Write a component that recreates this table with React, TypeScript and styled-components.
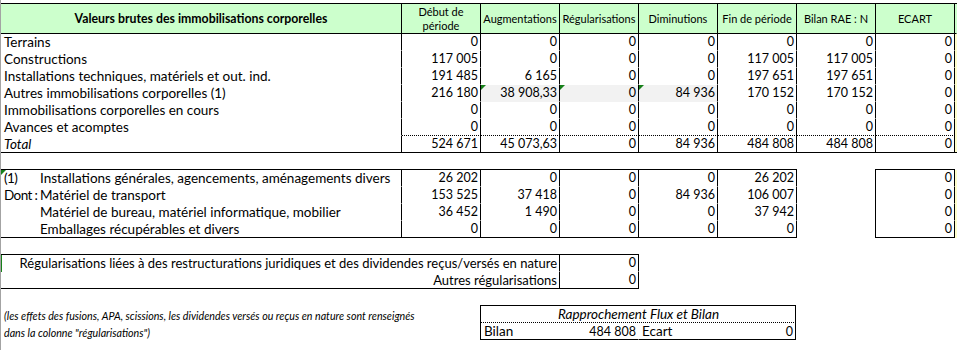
import { Fragment } from "react";
import styled, { createGlobalStyle, css } from "styled-components";

type Line = "solid" | "dotted" | "none";

const GlobalStyle = createGlobalStyle`
  html, body {
    margin: 0;
    padding: 0;
    background: #fff;
  }
  body {
    font-family: Lato, "Liberation Sans", sans-serif;
    color: #000;
  }
`;

const Sheet = styled.div`
  width: 957px;
  height: 350px;
  box-sizing: border-box;
  border-left: 1px solid #a3a3a3;
  padding-top: 3px;
  overflow: hidden;
  display: flex;
  flex-direction: column;
  gap: 16px;
`;

const FlowTable = styled.div`
  display: grid;
  grid-template-columns: 401px repeat(7, 79px) 2px;
  border-top: 1px solid #000;
`;

const HeadCell = styled.div<{ $title?: boolean; $edge?: boolean }>`
  box-sizing: border-box;
  height: 30px;
  background: #ccffcc;
  border-bottom: 1px solid #000;
  border-right: 1px solid ${(p) => (p.$edge ? "transparent" : "#000")};
  display: flex;
  align-items: center;
  justify-content: center;
  text-align: center;
  white-space: pre-line;
  font-size: ${(p) => (p.$title ? "12.3px" : "11px")};
  font-weight: ${(p) => (p.$title ? 700 : 400)};
  line-height: 14px;
`;

const Cell = styled.div<{
  $align?: "left" | "right" | "center";
  $bottom?: Line;
  $right?: boolean;
  $fill?: string;
  $italic?: boolean;
  $flag?: boolean;
  $span?: boolean;
  $size?: number;
}>`
  position: relative;
  box-sizing: border-box;
  height: 17px;
  padding: 0 2px 0 3px;
  font-size: ${(p) => p.$size ?? 13.5}px;
  line-height: 16px;
  white-space: nowrap;
  overflow: hidden;
  display: flex;
  align-items: baseline;
  justify-content: ${(p) =>
    p.$align === "right" ? "flex-end" : p.$align === "center" ? "center" : "flex-start"};
  background: ${(p) => p.$fill ?? "transparent"};
  border-bottom: 1px ${(p) => (p.$bottom === "dotted" ? "dotted" : "solid")}
    ${(p) => (p.$bottom && p.$bottom !== "none" ? "#000" : "transparent")};
  border-right: 1px solid ${(p) => (p.$right ? "#000" : "transparent")};
  font-style: ${(p) => (p.$italic ? "italic" : "normal")};
  ${(p) => p.$span && css`grid-column: 1 / -1;`}
  ${(p) =>
    p.$flag &&
    css`
      &::before {
        content: "";
        position: absolute;
        left: 0;
        top: 0;
        border-top: 5px solid #17801a;
        border-right: 5px solid transparent;
      }
    `}
`;

const Num = styled(Cell).attrs({ $align: "right" as const, $right: true, $size: 12.5 })``;

const Edge = styled.div<{ $bottom?: boolean }>`
  box-sizing: border-box;
  height: 17px;
  background: #ffffcc;
  border-bottom: 1px solid ${(p) => (p.$bottom ? "#000" : "#ffffcc")};
`;

const DetailRow = styled.div`
  display: flex;
  align-items: flex-start;
`;

const DetailTable = styled.div`
  display: grid;
  grid-template-columns: 401px repeat(5, 79px);
  border-top: 1px solid #000;
`;

const Marker = styled.span`
  width: 36px;
  flex: none;
  letter-spacing: -0.6px;
`;

const EcartBox = styled.div`
  margin-left: 78px;
  width: 80px;
  box-sizing: border-box;
  border-top: 1px solid #000;
  border-left: 1px solid #000;
  display: flex;
  flex-direction: column;
`;

const EdgeColumn = styled.div`
  width: 2px;
  padding-top: 1px;
  display: flex;
  flex-direction: column;
`;

const RegulTable = styled.div`
  position: relative;
  display: grid;
  grid-template-columns: 559px 79px;
  width: 638px;
  border-top: 1px solid #000;

  &::before {
    content: "";
    position: absolute;
    left: -1px;
    top: 0;
    width: 2px;
    height: 17px;
    background: #17801a;
  }
`;

const BottomRow = styled.div`
  display: flex;
  align-items: flex-start;
`;

const Footnote = styled.div`
  width: 479px;
  padding-top: 2px;
  font-style: italic;
  font-size: 10.7px;
`;

const NoteLine = styled.div`
  height: 17px;
  line-height: 17px;
  padding-left: 3px;
  white-space: nowrap;
`;

const RapBox = styled.div`
  width: 316px;
  box-sizing: border-box;
  border-top: 1px solid #000;
  border-left: 1px solid #000;
  display: grid;
  grid-template-columns: 158px 157px;
`;

const Grow = styled.span`
  flex: 1;
`;

const Amount = styled.span`
  font-size: 12.5px;
`;

const columns = [
  "Début de\npériode",
  "Augmentations",
  "Régularisations",
  "Diminutions",
  "Fin de période",
  "Bilan RAE : N",
  "ECART",
];

type FlowRow = {
  label: string;
  values: string[];
  total?: boolean;
  shaded?: number[];
};

const zeros = ["0", "0", "0", "0", "0", "0", "0"];

const flows: FlowRow[] = [
  { label: "Terrains", values: zeros },
  { label: "Constructions", values: ["117 005", "0", "0", "0", "117 005", "117 005", "0"] },
  {
    label: "Installations techniques, matériels et out. ind.",
    values: ["191 485", "6 165", "0", "0", "197 651", "197 651", "0"],
  },
  {
    label: "Autres immobilisations corporelles (1)",
    values: ["216 180", "38 908,33", "0", "84 936", "170 152", "170 152", "0"],
    shaded: [1, 2, 3],
  },
  { label: "Immobilisations corporelles en cours", values: zeros },
  { label: "Avances et acomptes", values: zeros },
  {
    label: "Total",
    values: ["524 671", "45 073,63", "0", "84 936", "484 808", "484 808", "0"],
    total: true,
  },
];

type DetailLine = { mark: string; label: string; values: string[]; ecart: string };

const details: DetailLine[] = [
  {
    mark: "(1)",
    label: "Installations générales, agencements, aménagements divers",
    values: ["26 202", "0", "0", "0", "26 202"],
    ecart: "0",
  },
  {
    mark: "Dont :",
    label: "Matériel de transport",
    values: ["153 525", "37 418", "0", "84 936", "106 007"],
    ecart: "0",
  },
  {
    mark: "",
    label: "Matériel de bureau, matériel informatique, mobilier",
    values: ["36 452", "1 490", "0", "0", "37 942"],
    ecart: "0",
  },
  {
    mark: "",
    label: "Emballages récupérables et divers",
    values: ["0", "0", "0", "0", "0"],
    ecart: "0",
  },
];

const regularisations = [
  "Régularisations liées à des restructurations juridiques et des dividendes reçus/versés en nature",
  "Autres régularisations",
];

export default function App() {
  return (
    <>
      <GlobalStyle />
      <Sheet>
        <FlowTable>
          <HeadCell $title>Valeurs brutes des immobilisations corporelles</HeadCell>
          {columns.map((c) => (
            <HeadCell key={c}>{c}</HeadCell>
          ))}
          <HeadCell $edge />
          {flows.map((row, r) => {
            const last = r === flows.length - 1;
            const beforeTotal = r === flows.length - 2;
            return (
              <Fragment key={row.label}>
                <Cell $right $bottom={last ? "solid" : "none"} $italic={row.total}>
                  {row.label}
                </Cell>
                {row.values.map((v, i) => (
                  <Num
                    key={i}
                    $bottom={last ? "solid" : beforeTotal ? "dotted" : "none"}
                    $fill={row.shaded?.includes(i) ? "#f2f2f2" : undefined}
                    $flag={row.shaded?.includes(i)}
                  >
                    {v}
                  </Num>
                ))}
                <Edge $bottom={last} />
              </Fragment>
            );
          })}
        </FlowTable>

        <DetailRow>
          <DetailTable>
            {details.map((d, r) => {
              const last = r === details.length - 1;
              return (
                <Fragment key={d.label}>
                  <Cell $right $bottom={last ? "solid" : "none"} $flag={r === 0}>
                    <Marker>{d.mark}</Marker>
                    {d.label}
                  </Cell>
                  {d.values.map((v, i) => (
                    <Num key={i} $bottom={last ? "solid" : "none"}>
                      {v}
                    </Num>
                  ))}
                </Fragment>
              );
            })}
          </DetailTable>
          <EcartBox>
            {details.map((d, r) => (
              <Num key={d.label} $bottom={r === details.length - 1 ? "solid" : "none"}>
                {d.ecart}
              </Num>
            ))}
          </EcartBox>
          <EdgeColumn>
            {details.map((d) => (
              <Edge key={d.label} />
            ))}
          </EdgeColumn>
        </DetailRow>

        <RegulTable>
          {regularisations.map((label, r) => {
            const last = r === regularisations.length - 1;
            return (
              <Fragment key={label}>
                <Cell $align="right" $right $size={13} $bottom={last ? "solid" : "none"}>
                  {label}
                </Cell>
                <Num $bottom={last ? "solid" : "none"}>0</Num>
              </Fragment>
            );
          })}
        </RegulTable>

        <BottomRow>
          <Footnote>
            <NoteLine>
              (les effets des fusions, APA, scissions, les dividendes versés ou reçus en nature sont
              renseignés
            </NoteLine>
            <NoteLine>dans la colonne "régularisations")</NoteLine>
          </Footnote>
          <RapBox>
            <Cell $span $align="center" $italic $right $bottom="dotted">
              Rapprochement Flux et Bilan
            </Cell>
            <Cell $bottom="solid">
              <Grow>Bilan</Grow>
              <Amount>484 808</Amount>
            </Cell>
            <Cell $right $bottom="solid">
              <Grow>Ecart</Grow>
              <Amount>0</Amount>
            </Cell>
          </RapBox>
        </BottomRow>
      </Sheet>
    </>
  );
}
